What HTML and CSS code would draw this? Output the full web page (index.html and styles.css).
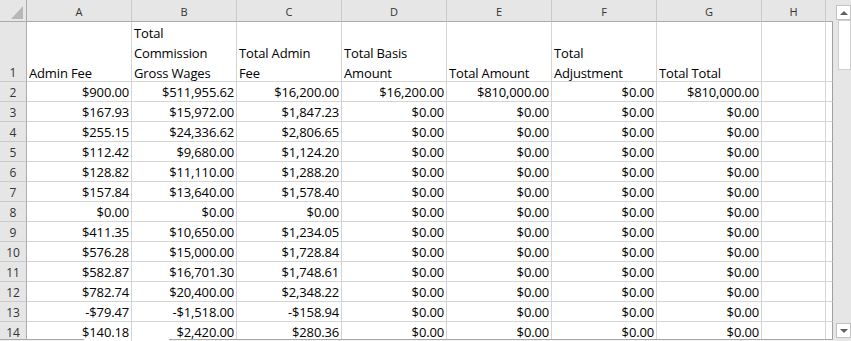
FILE: index.html
```html
<!DOCTYPE html>
<html>
<head>
<meta charset="utf-8">
<link rel="stylesheet" href="styles.css">
</head>
<body>
<div class="app">
  <div class="sheet">
    <div class="grid">
      <div class="corner"><svg width="26" height="21" viewBox="0 0 26 21"><polygon points="11,19 23,19 23,6" fill="#b7b7b7"/></svg></div>
      <div class="ch">A</div><div class="ch">B</div><div class="ch">C</div><div class="ch">D</div><div class="ch">E</div><div class="ch">F</div><div class="ch">G</div><div class="ch">H</div><div class="ch ch-last"></div>

      <div class="rh">1</div>
      <div class="c l"><span>Admin Fee</span></div>
      <div class="c l"><span>Total<br>Commission<br>Gross Wages</span></div>
      <div class="c l"><span>Total Admin<br>Fee</span></div>
      <div class="c l"><span>Total Basis<br>Amount</span></div>
      <div class="c l"><span>Total Amount</span></div>
      <div class="c l"><span>Total<br>Adjustment</span></div>
      <div class="c l"><span>Total Total</span></div>
      <div class="c"></div><div class="c edge"></div>

      <div class="rh">2</div><div class="c">$900.00</div><div class="c">$511,955.62</div><div class="c">$16,200.00</div><div class="c">$16,200.00</div><div class="c">$810,000.00</div><div class="c">$0.00</div><div class="c">$810,000.00</div><div class="c"></div><div class="c edge"></div>
      <div class="rh">3</div><div class="c">$167.93</div><div class="c">$15,972.00</div><div class="c">$1,847.23</div><div class="c">$0.00</div><div class="c">$0.00</div><div class="c">$0.00</div><div class="c">$0.00</div><div class="c"></div><div class="c edge"></div>
      <div class="rh">4</div><div class="c">$255.15</div><div class="c">$24,336.62</div><div class="c">$2,806.65</div><div class="c">$0.00</div><div class="c">$0.00</div><div class="c">$0.00</div><div class="c">$0.00</div><div class="c"></div><div class="c edge"></div>
      <div class="rh">5</div><div class="c">$112.42</div><div class="c">$9,680.00</div><div class="c">$1,124.20</div><div class="c">$0.00</div><div class="c">$0.00</div><div class="c">$0.00</div><div class="c">$0.00</div><div class="c"></div><div class="c edge"></div>
      <div class="rh">6</div><div class="c">$128.82</div><div class="c">$11,110.00</div><div class="c">$1,288.20</div><div class="c">$0.00</div><div class="c">$0.00</div><div class="c">$0.00</div><div class="c">$0.00</div><div class="c"></div><div class="c edge"></div>
      <div class="rh">7</div><div class="c">$157.84</div><div class="c">$13,640.00</div><div class="c">$1,578.40</div><div class="c">$0.00</div><div class="c">$0.00</div><div class="c">$0.00</div><div class="c">$0.00</div><div class="c"></div><div class="c edge"></div>
      <div class="rh">8</div><div class="c">$0.00</div><div class="c">$0.00</div><div class="c">$0.00</div><div class="c">$0.00</div><div class="c">$0.00</div><div class="c">$0.00</div><div class="c">$0.00</div><div class="c"></div><div class="c edge"></div>
      <div class="rh">9</div><div class="c">$411.35</div><div class="c">$10,650.00</div><div class="c">$1,234.05</div><div class="c">$0.00</div><div class="c">$0.00</div><div class="c">$0.00</div><div class="c">$0.00</div><div class="c"></div><div class="c edge"></div>
      <div class="rh">10</div><div class="c">$576.28</div><div class="c">$15,000.00</div><div class="c">$1,728.84</div><div class="c">$0.00</div><div class="c">$0.00</div><div class="c">$0.00</div><div class="c">$0.00</div><div class="c"></div><div class="c edge"></div>
      <div class="rh">11</div><div class="c">$582.87</div><div class="c">$16,701.30</div><div class="c">$1,748.61</div><div class="c">$0.00</div><div class="c">$0.00</div><div class="c">$0.00</div><div class="c">$0.00</div><div class="c"></div><div class="c edge"></div>
      <div class="rh">12</div><div class="c">$782.74</div><div class="c">$20,400.00</div><div class="c">$2,348.22</div><div class="c">$0.00</div><div class="c">$0.00</div><div class="c">$0.00</div><div class="c">$0.00</div><div class="c"></div><div class="c edge"></div>
      <div class="rh">13</div><div class="c">-$79.47</div><div class="c">-$1,518.00</div><div class="c">-$158.94</div><div class="c">$0.00</div><div class="c">$0.00</div><div class="c">$0.00</div><div class="c">$0.00</div><div class="c"></div><div class="c edge"></div>
      <div class="rh">14</div><div class="c">$140.18</div><div class="c">$2,420.00</div><div class="c">$280.36</div><div class="c">$0.00</div><div class="c">$0.00</div><div class="c">$0.00</div><div class="c">$0.00</div><div class="c"></div><div class="c edge"></div>
    </div>
    <div class="tabline tabline-a"></div>
    <div class="tabline tabline-b"></div>
  </div>
  <div class="vscroll">
    <div class="sbtn"><span class="arrow up"></span></div>
    <div class="thumb"></div>
    <div class="track"></div>
    <div class="sbtn"><span class="arrow down"></span></div>
  </div>
</div>
</body>
</html>
```

FILE: styles.css
```css
html, body {
  margin: 0;
  padding: 0;
  background: #ffffff;
}

.app {
  display: flex;
  width: 851px;
  height: 341px;
  overflow: hidden;
  font-family: "Open Sans", "Noto Sans", sans-serif;
}

.sheet {
  position: relative;
  width: 833px;
  height: 341px;
  overflow: hidden;
  flex: none;
}

.grid {
  display: grid;
  grid-template-columns: 27px repeat(7, 105px) 64px 7px;
  grid-template-rows: 22px 60px repeat(13, 20px);
}

.grid > div {
  box-sizing: border-box;
  overflow: hidden;
}

.corner {
  background: #e6e6e6;
  border-right: 1px solid #ababab;
  border-bottom: 1px solid #ababab;
}

.corner svg {
  display: block;
}

.ch {
  background: #e6e6e6;
  border-right: 1px solid #cacaca;
  border-bottom: 1px solid #ababab;
  color: #333333;
  font-size: 11px;
  display: flex;
  align-items: center;
  justify-content: center;
  padding-top: 1px;
}

.ch-last {
  border-right: 0;
}

.rh {
  background: #e6e6e6;
  border-right: 1px solid #ababab;
  border-bottom: 1px solid #cacaca;
  color: #333333;
  font-size: 12px;
  display: flex;
  align-items: flex-end;
  justify-content: center;
  line-height: 16px;
}

.c {
  border-right: 1px solid #d4d4d4;
  border-bottom: 1px solid #d4d4d4;
  color: #000000;
  font-size: 13px;
  letter-spacing: -0.15px;
  line-height: 17px;
  display: flex;
  align-items: flex-end;
  justify-content: flex-end;
  padding: 0 2px 0 2px;
  white-space: nowrap;
}

.c.l {
  justify-content: flex-start;
  text-align: left;
  line-height: 20px;
}

.c.l span {
  margin-bottom: -2px;
}

.c.edge {
  border-right: 1px solid #a0a0a0;
  padding: 0;
}

.tabline {
  position: absolute;
  top: 339px;
  height: 2px;
  box-sizing: border-box;
  border-top: 1px solid #a8a8a8;
  background: #f3f3f3;
}

.tabline-a {
  left: 0;
  width: 84px;
}

.tabline-b {
  left: 169px;
  width: 664px;
}

.vscroll {
  width: 18px;
  height: 341px;
  background: #e6e6e6;
  box-sizing: border-box;
  padding: 5px 0 3px 3px;
  display: flex;
  flex-direction: column;
  flex: none;
}

.sbtn {
  width: 15px;
  height: 15px;
  box-sizing: border-box;
  background: #ffffff;
  border: 1px solid #c3c3c3;
  display: flex;
  align-items: center;
  justify-content: center;
  flex: none;
}

.thumb {
  width: 13px;
  height: 50px;
  margin-left: 2px;
  box-sizing: border-box;
  background: #ffffff;
  border: 1px solid #cfcfcf;
  flex: none;
}

.track {
  flex: 1;
}

.arrow {
  width: 0;
  height: 0;
  border-left: 4px solid transparent;
  border-right: 4px solid transparent;
}

.arrow.up {
  border-bottom: 4px solid #606060;
}

.arrow.down {
  border-top: 4px solid #606060;
}
```
